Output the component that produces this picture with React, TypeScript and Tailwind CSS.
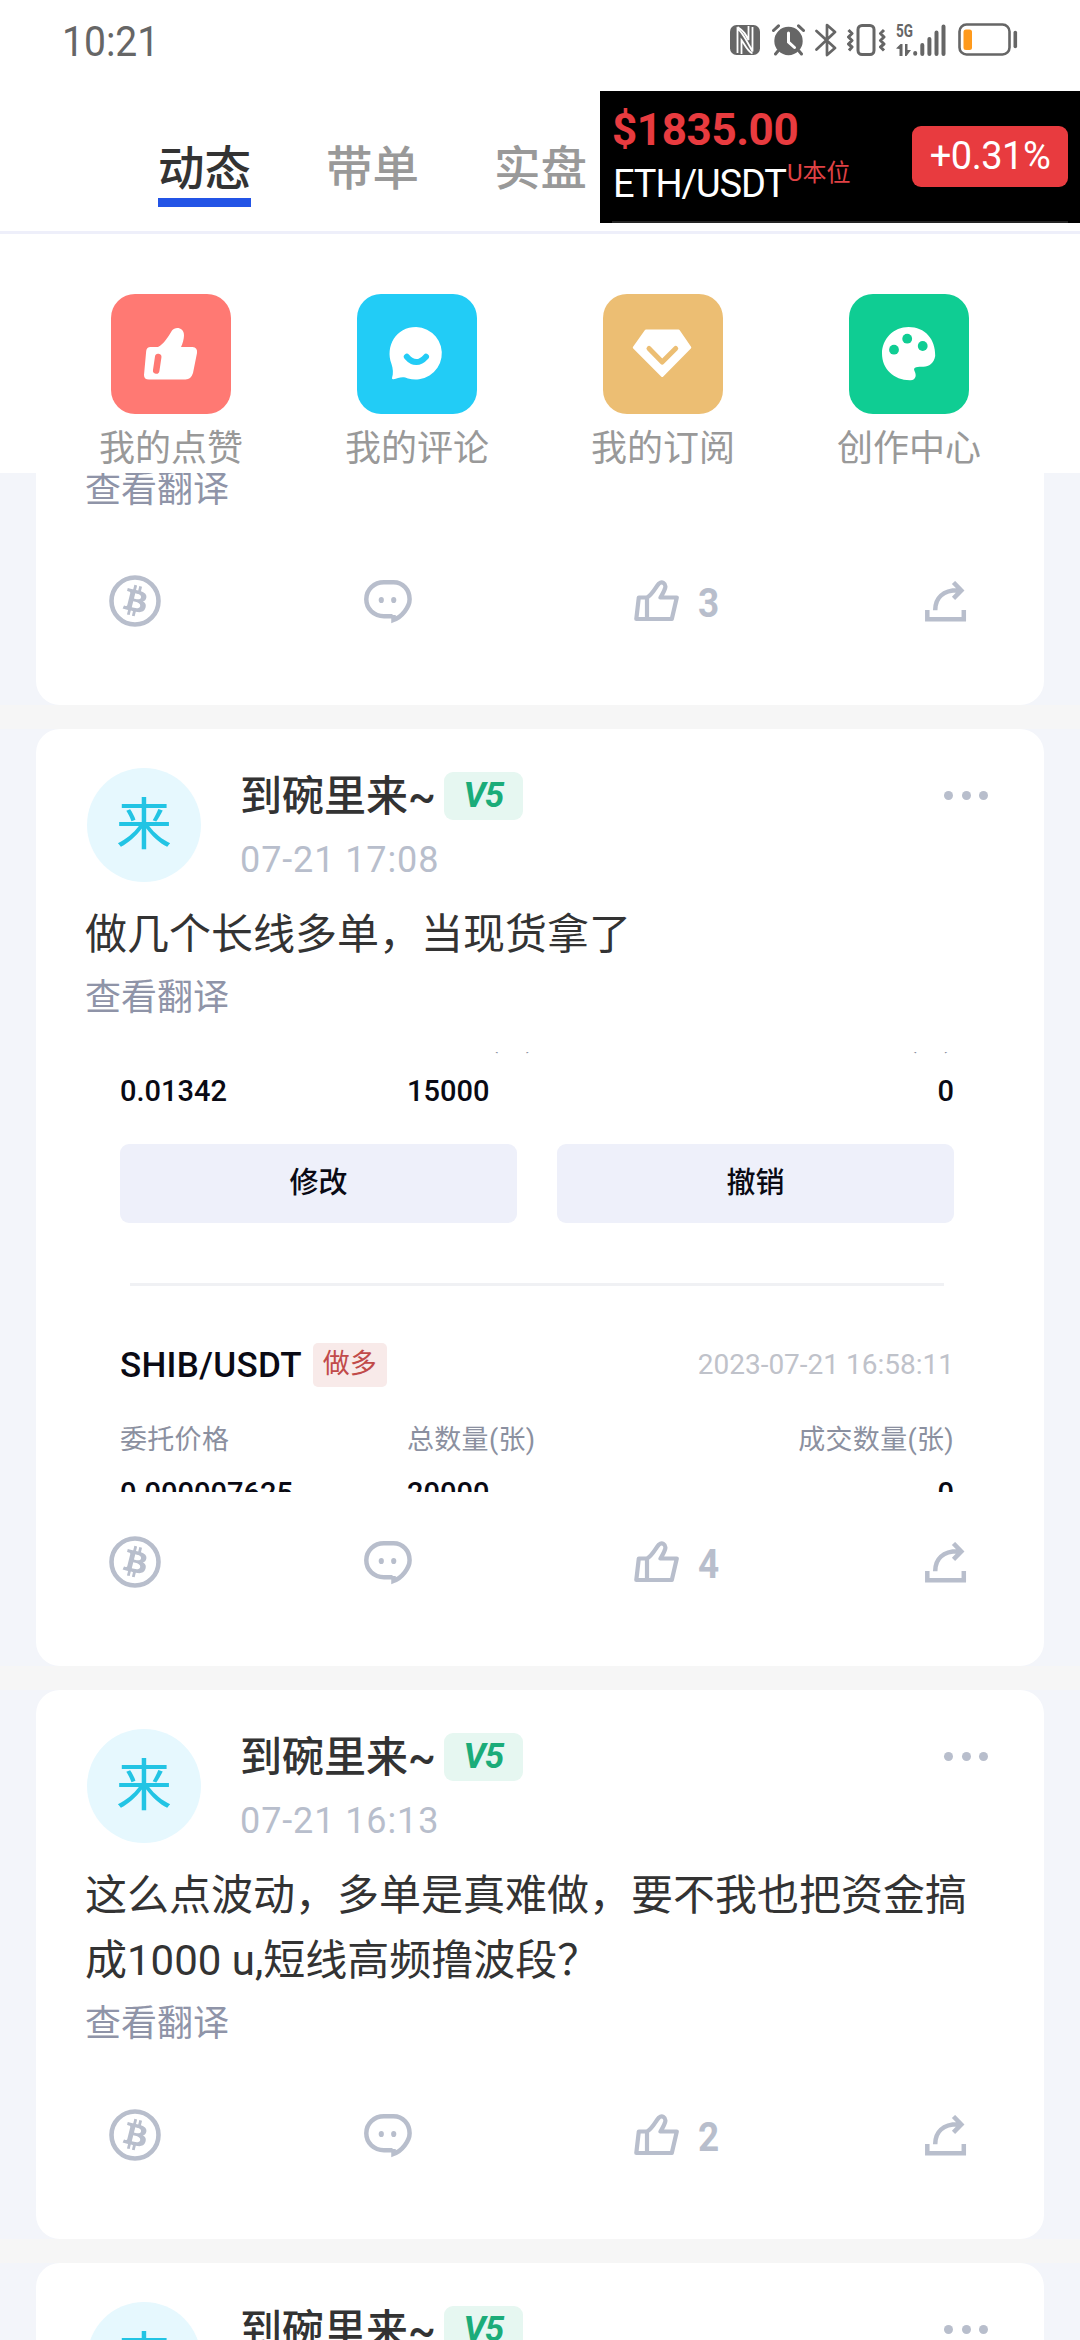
import React from "react";

const TABS = [
  { label: "动态", active: true },
  { label: "带单", active: false },
  { label: "实盘", active: false },
];

function StatusIcons() {
  return (
    <div className="flex items-center text-[#666666]">
      <svg width="30" height="30" viewBox="0 0 30 30">
        <rect width="30" height="30" rx="6.5" fill="currentColor" />
        <path d="M7.5 28V3.5C12 7 16 14 22.5 26.5V2" fill="none" stroke="#fff" strokeWidth="1.8" />
        <path d="M11.5 29V15C14 18 17 26 22.5 28.5M7.5 2C14 6 16 10 18.5 15V1" fill="none" stroke="#fff" strokeWidth="1.8" />
      </svg>
      <svg className="ml-[12px]" width="33" height="32" viewBox="0 0 33 32">
        <circle cx="16.5" cy="17" r="14.2" fill="currentColor" />
        <path d="M1.5 6.5 6.5 1.8M31.5 6.5 26.5 1.8M6 27l-2.5 3M27 27l2.5 3" stroke="currentColor" strokeWidth="3" strokeLinecap="round" />
        <path d="M16.5 9v9l6 5.5" fill="none" stroke="#fff" strokeWidth="3" strokeLinecap="round" />
      </svg>
      <svg className="ml-[10px]" width="22" height="34" viewBox="0 0 22 34">
        <path d="M1.500 8 20 25 12 32V2l8 7L1.500 26.500" fill="none" stroke="currentColor" strokeWidth="2.700" strokeLinejoin="round" strokeLinecap="round" />
      </svg>
      <svg className="ml-[10px]" width="39" height="32" viewBox="0 0 39 32">
        <rect x="11" y="1.500" width="16" height="29" rx="4" fill="none" stroke="currentColor" strokeWidth="3" />
        <path d="M1.500 6l3.500 3.500-3.500 3.500L5 16.500 1.500 20 5 23l-3 3.500M37 6l-3.500 3.500L37 13l-3.500 3.500L37 20l-3.500 3 3.500 3.500" fill="none" stroke="currentColor" strokeWidth="3" strokeLinejoin="round" />
      </svg>
      <div className="ml-[10px] flex h-[32px] w-[17px] flex-col justify-between">
        <span className="origin-left scale-x-75 text-[18px] leading-[14px] font-bold">5G</span>
        <svg width="16" height="12" viewBox="0 0 16 12">
          <path d="M0 4.500 4.500 0h2v12h-3V5zM9 0h2.500v6H15l-4.500 6H9z" fill="currentColor" />
        </svg>
      </div>
      <svg width="33" height="32" viewBox="0 0 33 32">
        <path d="M2.200 29v.8M9.300 21v9M16.400 15v15M23.500 8.500V30M30.500 2.500V30" stroke="currentColor" strokeWidth="4" strokeLinecap="round" />
      </svg>
      <svg className="ml-[12px]" width="60" height="34" viewBox="0 0 60 34">
        <rect x="1.500" y="1.500" width="50" height="30" rx="7" fill="none" stroke="currentColor" strokeWidth="2.600" />
        <rect x="5.500" y="6.500" width="8.500" height="20.500" rx="2.500" fill="#ff9a1c" />
        <path d="M57.300 9.500v14" stroke="currentColor" strokeWidth="3.600" strokeLinecap="round" />
      </svg>
    </div>
  );
}

function PriceWidget() {
  return (
    <div className="absolute top-[91px] right-0 z-10 flex h-[132px] w-[480px] flex-col bg-black px-[12px]">
      <div className="flex flex-1 items-start justify-between">
        <div className="pt-[15px]">
          <div className="text-[44px] leading-[48px] font-bold tracking-[-0.4px] text-[#e83b3f]">$1835.00</div>
          <div className="flex items-start pl-[1px] text-white">
            <span className="text-[38px] leading-[60px] tracking-[-1.1px]">ETH/USDT</span>
            <span className="pt-[2px] pl-[1px] text-[24px] leading-[34px] text-[#e04245]">U本位</span>
          </div>
        </div>
        <div className="mt-[35px] flex h-[61px] w-[156px] items-center justify-center rounded-[9px] bg-[#e83b3f] text-[38px] tracking-[-0.5px] text-white">
          +0.31%
        </div>
      </div>
      <div className="h-[2px] bg-[#242424]" />
    </div>
  );
}

function ThumbTile() {
  return (
    <>
      <path
        d="M39.500 53H47C53 50 57 43 61 36.500C64 32.500 73 33 73 41.500C73 45 71.500 50 70 53H81.500Q86.700 53.500 86 59L82 79Q80 85.500 74.500 85.500H38Q33 85.500 33 81L35.200 57Q35.700 53 39.500 53Z"
        fill="#fff"
      />
      <path d="M47.200 63 45.200 76.500" stroke="#ff7973" strokeWidth="6.500" strokeLinecap="round" />
    </>
  );
}

function SmileTile() {
  return (
    <>
      <path d="M35 84C36.500 79 36 75 34.500 70C28 52 39 33 59.200 33A26.300 26.300 0 1 1 51 84.500C45 81.500 41 84.500 36.500 85.300Q34.800 85.500 35 84Z" fill="#fff" />
      <path d="M49.800 62.700Q59.200 73.500 69 62.700" fill="none" stroke="#22ccf6" strokeWidth="6" strokeLinecap="round" />
    </>
  );
}

function DiamondTile() {
  return (
    <>
      <path d="M43 37H75.500L86.800 53.500 59.200 81.500 31.300 53.500Z" fill="#fff" stroke="#fff" strokeWidth="3" strokeLinejoin="round" />
      <path d="M46 54.500 59.200 68 72.700 54.500" fill="none" stroke="#ecbe73" strokeWidth="5" strokeLinecap="round" strokeLinejoin="round" />
    </>
  );
}

function PaletteTile() {
  return (
    <>
      <path d="M59.600 33C76 33 86.500 45 86.200 62C85 69 80 72.800 74.500 72.800C69 73 63.500 72.500 65.500 77C67.500 80.500 67.500 86 61.500 86.200C45 86.500 33 75 33 59.500C33 45 44.500 33 59.600 33Z" fill="#fff" />
      <circle cx="45" cy="55.700" r="4.900" fill="#0fcd93" />
      <circle cx="58.200" cy="44.700" r="4.900" fill="#0fcd93" />
      <circle cx="73.700" cy="52" r="4.900" fill="#0fcd93" />
    </>
  );
}

const SHORTCUTS = [
  { label: "我的点赞", tile: "bg-[#ff7973]", Glyph: ThumbTile },
  { label: "我的评论", tile: "bg-[#22ccf6]", Glyph: SmileTile },
  { label: "我的订阅", tile: "bg-[#ecbe73]", Glyph: DiamondTile },
  { label: "创作中心", tile: "bg-[#0fcd93]", Glyph: PaletteTile },
];

function BitcoinIcon() {
  return (
    <svg width="52" height="52" viewBox="0 0 52 52">
      <circle cx="26" cy="26" r="23.500" fill="none" stroke="currentColor" strokeWidth="4.600" />
      <g transform="translate(1.600 1.200) scale(2.070)">
        <path
          fill="currentColor"
          d="M17.288 10.291c.24-1.59-.974-2.45-2.64-3.03l.54-2.153-1.315-.33-.525 2.107c-.345-.087-.705-.167-1.064-.25l.526-2.127-1.32-.33-.54 2.165c-.285-.067-.565-.132-.84-.2l-1.815-.45-.35 1.407s.975.225.955.236c.535.136.63.486.615.766l-1.477 5.92c-.075.166-.24.406-.614.314.015.02-.96-.24-.96-.24l-.66 1.51 1.71.426.93.242-.54 2.19 1.32.327.54-2.17c.36.1.705.19 1.05.273l-.51 2.154 1.32.33.545-2.19c2.24.427 3.93.257 4.64-1.774.57-1.637-.03-2.58-1.217-3.196.854-.193 1.5-.76 1.68-1.93h.01zm-3.01 4.22c-.404 1.64-3.157.75-4.05.53l.72-2.9c.896.23 3.757.67 3.33 2.37zm.41-4.24c-.37 1.49-2.662.735-3.405.55l.654-2.64c.744.18 3.137.524 2.75 2.084v.006z"
        />
      </g>
    </svg>
  );
}

function CommentIcon() {
  return (
    <svg width="48" height="44" viewBox="0 0 48 44">
      <path
        d="M28.500 36.200H20C10 36.200 2.300 29 2.300 19.300S10 2.300 20 2.300H29.500C39 2.300 45.600 10 45.600 19.300C45.600 27 38 37 29.500 40V35"
        fill="none"
        stroke="currentColor"
        strokeWidth="4.500"
      />
      <ellipse cx="17.300" cy="20" rx="2.600" ry="3.100" fill="currentColor" />
      <ellipse cx="29.700" cy="20" rx="2.600" ry="3.100" fill="currentColor" />
    </svg>
  );
}

function LikeIcon() {
  return (
    <svg width="46" height="42" viewBox="0 0 46 42">
      <path
        d="M2.300 39 4.800 17.500H13C19 14 21.500 7 25 3.500C28 1 32 3.500 31.300 7.500C30.500 11 28.500 14 26.500 17.500H42.800L37.800 39ZM13 17.500V39"
        fill="none"
        stroke="currentColor"
        strokeWidth="4.200"
        strokeLinejoin="round"
      />
    </svg>
  );
}

function ShareIcon() {
  return (
    <svg width="42" height="41" viewBox="0 0 42 41">
      <path d="M2.300 29V38.200H38.800V29M10.200 29.300C10.200 17 18 9.300 33 9.300H36.500M28.500 1.500 36.300 9.400 28.500 17.300" fill="none" stroke="currentColor" strokeWidth="4.500" />
    </svg>
  );
}

function Actions({ likes }: { likes: number }) {
  return (
    <div className="mt-auto mb-[78px] flex h-[52px] shrink-0 items-center pr-[77px] pl-[73px] text-[#b8becc]">
      <BitcoinIcon />
      <div className="ml-[203px] pt-[2px]">
        <CommentIcon />
      </div>
      <div className="ml-[222px] flex items-center">
        <LikeIcon />
        <span className="ml-[18px] origin-left scale-x-90 pt-[3px] text-[41px] leading-[48px] font-bold">{likes}</span>
      </div>
      <div className="ml-auto">
        <ShareIcon />
      </div>
    </div>
  );
}

function Translate() {
  return <div className="pt-px text-[36px] leading-[60px] text-[#8f94a8]">查看翻译</div>;
}

function PostHeader({ date }: { date: string }) {
  return (
    <div className="flex h-[173px] shrink-0 items-start pt-[39px] pr-[56px] pl-[51px]">
      <div className="flex h-[114px] w-[114px] items-center justify-center rounded-full bg-[#e6f8fe] text-[56px] leading-[56px] text-[#22c4e4]">
        来
      </div>
      <div className="ml-[39px]">
        <div className="flex items-center pt-[3px]">
          <span className="pt-px text-[42px] leading-[49px] font-medium text-[#333333]">到碗里来~</span>
          <span className="ml-[8px] flex h-[48px] w-[79px] items-center justify-center rounded-[9px] bg-[#e6f7f1] pt-px text-[35px] font-bold tracking-[-1px] text-[#1bac79] italic">
            V5
          </span>
        </div>
        <div className="mt-[14px] text-[36px] leading-[50px] tracking-[0.9px] text-[#b8becc]">{date}</div>
      </div>
      <div className="mt-[23px] ml-auto flex gap-[8.500px]">
        <i className="h-[9px] w-[9px] rounded-full bg-[#b8becc]" />
        <i className="h-[9px] w-[9px] rounded-full bg-[#b8becc]" />
        <i className="h-[9px] w-[9px] rounded-full bg-[#b8becc]" />
      </div>
    </div>
  );
}

function OrderLabels() {
  return (
    <div className="grid grid-cols-[287px_1fr_1fr] text-[27px] leading-[40px] tracking-[0.3px] text-[#8b90a0]">
      <span>委托价格</span>
      <span>总数量(张)</span>
      <span className="text-right">成交数量(张)</span>
    </div>
  );
}

function OrderValues({ price, total }: { price: string; total: string }) {
  return (
    <div className="mt-[13px] grid grid-cols-[287px_1fr_1fr] text-[29px] leading-[40px] font-medium text-[#0a0a14]">
      <span>{price}</span>
      <span>{total}</span>
      <span className="text-right">0</span>
    </div>
  );
}

function OrderShot() {
  return (
    <div className="mt-[24px] flex h-[440px] shrink-0 flex-col overflow-hidden pr-[90px] pl-[84px]">
      <div className="-mt-[34px]">
        <OrderLabels />
        <OrderValues price="0.01342" total="15000" />
      </div>
      <div className="mt-[33px] grid grid-cols-2 gap-[40px] text-[29px] font-medium text-[#0a0a14]">
        <div className="flex h-[79px] items-center justify-center rounded-[9px] bg-[#eef0fa] pt-px">修改</div>
        <div className="flex h-[79px] items-center justify-center rounded-[9px] bg-[#eef0fa] pt-px">撤销</div>
      </div>
      <div className="mx-[10px] mt-[60px] h-[3px] shrink-0 bg-[#f0f1f4]" />
      <div className="mt-[57px] flex h-[44px] shrink-0 items-center">
        <span className="pt-[2px] text-[35px] font-medium tracking-[0.3px] text-[#0a0a14]">SHIB/USDT</span>
        <span className="ml-[11px] flex h-[44px] w-[74px] items-center justify-center rounded-[5px] bg-[#f8eae9] pb-px text-[27px] text-[#c14a49]">
          做多
        </span>
        <span className="ml-auto text-[28px] text-[#bfc2ca]">2023-07-21 16:58:11</span>
      </div>
      <div className="mt-[33px]">
        <OrderLabels />
        <OrderValues price="0.000007625" total="20000" />
      </div>
    </div>
  );
}

function CardFrame({ size, children }: { size: string; children: React.ReactNode }) {
  return (
    <div className="shrink-0 bg-[#f3f5fa] px-[36px]">
      <div className={"flex flex-col overflow-hidden bg-white " + size}>{children}</div>
    </div>
  );
}

export default function App() {
  return (
    <div className="relative flex h-[2340px] w-[1080px] flex-col overflow-hidden bg-[#f6f6f6] font-['Roboto','Noto_Sans_CJK_SC',sans-serif]">
      <header className="flex h-[473px] shrink-0 flex-col bg-white">
        <div className="flex h-[80px] shrink-0 items-center justify-between pr-[62px] pl-[62px]">
          <span className="origin-left scale-x-[0.93] pt-[4px] text-[42px] leading-[50px] text-[#666666]">10:21</span>
          <StatusIcons />
        </div>
        <nav className="flex h-[154px] shrink-0 items-start gap-[75px] border-b-[3px] border-[#eeeffa] pt-[61px] pl-[158px] text-[46.500px] font-medium">
          {TABS.map((tab) => (
            <div key={tab.label} className={tab.active ? "text-[#333333]" : "text-[#999999]"}>
              <div className="leading-[57px]">{tab.label}</div>
              {tab.active && <div className="h-[9px] bg-[#2354e6]" />}
            </div>
          ))}
        </nav>
        <div className="grid grid-cols-4 px-[48px] pt-[60px]">
          {SHORTCUTS.map(({ label, tile, Glyph }) => (
            <div key={label} className="flex flex-col items-center">
              <div className={"h-[120px] w-[120px] rounded-[24px] " + tile}>
                <svg width="120" height="120" viewBox="0 0 120 120">
                  <Glyph />
                </svg>
              </div>
              <span className="mt-[11px] text-[36px] leading-[48px] text-[#999999]">{label}</span>
            </div>
          ))}
        </div>
      </header>
      <PriceWidget />

      <main className="flex flex-1 flex-col gap-[24px] overflow-hidden">
        <CardFrame size="h-[232px] rounded-b-[24px]">
          <div className="-mt-[14px] px-[49px]">
            <Translate />
          </div>
          <Actions likes={3} />
        </CardFrame>

        <CardFrame size="h-[937px] rounded-[24px]">
          <PostHeader date="07-21 17:08" />
          <div className="px-[49px]">
            <p className="text-[42px] leading-[65px] text-[#333333]">做几个长线多单，当现货拿了</p>
            <Translate />
          </div>
          <OrderShot />
          <Actions likes={4} />
        </CardFrame>

        <CardFrame size="h-[549px] rounded-[24px]">
          <PostHeader date="07-21 16:13" />
          <div className="px-[49px]">
            <p className="text-[42px] leading-[65px] text-[#333333]">
              这么点波动，多单是真难做，要不我也把资金搞
              <br />
              成1000 u,短线高频撸波段？
            </p>
            <Translate />
          </div>
          <Actions likes={2} />
        </CardFrame>

        <CardFrame size="h-[549px] rounded-[24px]">
          <PostHeader date="07-21 16:10" />
        </CardFrame>
      </main>
    </div>
  );
}
